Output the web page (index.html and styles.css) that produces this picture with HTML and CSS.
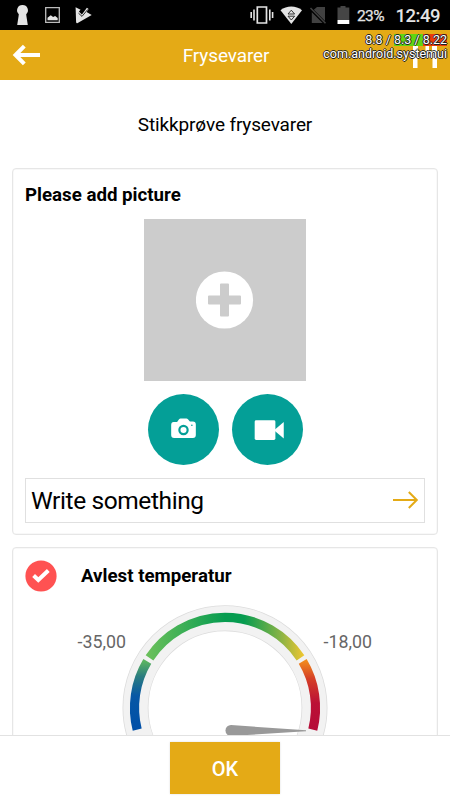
FILE: index.html
```html
<!DOCTYPE html>
<html lang="no">
<head>
<meta charset="utf-8">
<title>Frysevarer</title>
<link rel="stylesheet" href="styles.css">
</head>
<body>
<div class="screen">
  <div class="status">
    <svg class="status-left" width="110" height="30" viewBox="0 0 110 30" fill="#e4e4e4">
      <path d="M22.500 5a5.300 5.300 0 0 0-3.700 9.200l-.2 1.800-1.400 9h10.600l-1.400-9-.2-1.800A5.300 5.300 0 0 0 22.500 5z"/>
      <path d="M45.700 7.700h13.600v14.600H45.700z" fill="none" stroke="#bcbcbc" stroke-width="1.300"/>
      <path d="M47.500 20.300v-2.600l3.300-2.500 2.300 1.800 2-1 2.600 2v2.300z"/>
      <path d="M75.600 7.200l5 2.500-1.700 1.900 3 2.800 5-6.600 1.700 1.200-2 3.100 5.100 2.800-14 8c-1 .5-1.600.2-1.600-.8z"/>
      <path d="M78.500 13.200l3.500 3.200 5.800-7" fill="none" stroke="#000" stroke-width=".8"/>
    </svg>
    <div class="status-right">
      <svg width="104" height="30" viewBox="250 0 104 30" fill="#e4e4e4">
        <path d="M257.300 7h9.200v16h-9.200z" fill="none" stroke="#e4e4e4" stroke-width="1.700"/>
        <path d="M254 9.500v11M251.200 12v6M269.800 9.500v11M272.600 12v6" stroke="#e4e4e4" stroke-width="1.600"/>
        <path d="M280.500 10.200c6-5 15.500-5 21.500 0L291.300 24z"/>
        <path d="M288 14l3.300-3.800 3.300 3.800zM288 16.200h6.600l-3.300 3.800z" fill="none" stroke="#222" stroke-width=".9"/>
        <path d="M317 7h8v14L313.800 9.800zM311.800 12.200L322.600 23h-10.800z" fill="#414141"/>
        <path d="M310.500 8l15 15.200" stroke="#414141" stroke-width="1.500"/>
        <path d="M337.500 7.500h3V6h5v1.500h3.800V20h-11.800z" fill="#454545"/>
        <path d="M337.500 20h11.800v4h-11.800z" fill="#fff"/>
      </svg>
      <span class="battery">23%</span>
      <span class="clock">12:49</span>
    </div>
  </div>
  <header class="bar">
    <svg class="back" width="30" height="24" viewBox="0 0 30 24" fill="none" stroke="#fff" stroke-width="4"><path d="M30 12H6M14.300 3.200L5.500 12l8.800 8.800"/></svg>
    <h1>Frysevarer</h1>
    <svg class="save" width="28" height="28" viewBox="0 0 28 28" fill="#fff"><path d="M1 2h5v10h14V2h5v24h-4.500v-10.500h-15V26H1zM13.500 3h3.500v6h-3.500z"/></svg>
    <div class="overlay">
      <div class="load">8.8 / <span class="load-mid">8.3 /</span><span class="load-high">8.22</span></div>
      <div class="process">com.android.systemui</div>
    </div>
  </header>
  <main>
    <p class="intro">Stikkprøve frysevarer</p>
    <section class="card picture">
      <h2>Please add picture</h2>
      <div class="placeholder">
        <svg width="58" height="58" viewBox="0 0 58 58"><circle cx="28.500" cy="29" r="28.600" fill="#fff"/><path d="M24 13.500q0-1 1-1h7q1 0 1 1v11h11q1 0 1 1v7q0 1-1 1h-11v11q0 1-1 1h-7q-1 0-1-1v-11h-11q-1 0-1-1v-7q0-1 1-1h11z" fill="#ccc"/></svg>
      </div>
      <div class="actions">
        <span class="round"><svg width="71" height="71" viewBox="0 0 72 72"><path d="M26 28.500h3.500l2-3q.6-.7 1.500-.7h6q.9 0 1.500.7l2 2.500H45.500q3 0 3 3v10.500q0 3-3 3h-19q-3 0-3-3v-10q0-3 2.500-3z" fill="#fff"/><circle cx="36" cy="36.500" r="4.200" fill="none" stroke="#049f97" stroke-width="2.200"/><circle cx="44.500" cy="31.700" r=".8" fill="#049f97"/></svg></span>
        <span class="round"><svg width="71" height="71" viewBox="0 0 72 72" fill="#fff"><rect x="23" y="26.700" width="21" height="20" rx="1.500"/><path d="M43.500 36l9-7.500v16.500l-9-7.500z"/></svg></span>
      </div>
      <div class="field">
        <span>Write something</span>
        <svg width="26" height="18" viewBox="0 0 26 18" fill="none" stroke="#e4aa16" stroke-width="2"><path d="M0 9h24M15.800 1l8 8-8 8"/></svg>
      </div>
    </section>
    <section class="card reading">
      <div class="reading-head">
        <svg width="32" height="32" viewBox="0 0 32 32"><circle cx="16" cy="16" r="15.600" fill="#ff5252"/><path d="M8.600 15.500l4.700 4.500 10-9.500" fill="none" stroke="#fff" stroke-width="4"/></svg>
        <h2>Avlest temperatur</h2>
      </div>
      <svg class="gauge" width="424" height="150" viewBox="13 600 424 150">
        <defs>
          <linearGradient id="cold" gradientUnits="userSpaceOnUse" x1="0" y1="660" x2="0" y2="730"><stop offset="0" stop-color="#5cb560"/><stop offset=".22" stop-color="#2b7d80"/><stop offset=".5" stop-color="#0757a5"/><stop offset="1" stop-color="#004fa8"/></linearGradient>
          <linearGradient id="good" gradientUnits="userSpaceOnUse" x1="146" y1="0" x2="304" y2="0"><stop offset="0" stop-color="#6cc05b"/><stop offset=".5" stop-color="#069c50"/><stop offset=".62" stop-color="#069c50"/><stop offset=".85" stop-color="#87b346"/><stop offset="1" stop-color="#f0c62f"/></linearGradient>
          <linearGradient id="warm" gradientUnits="userSpaceOnUse" x1="0" y1="660" x2="0" y2="730"><stop offset="0" stop-color="#f18a1e"/><stop offset=".25" stop-color="#d54027"/><stop offset=".6" stop-color="#bb1035"/><stop offset="1" stop-color="#b50c38"/></linearGradient>
        </defs>
        <circle cx="225" cy="706.700" r="89.500" fill="none" stroke="#dcdcdc" stroke-width="26"/>
        <circle cx="225" cy="706.700" r="89.500" fill="none" stroke="#f2f2f2" stroke-width="24.400"/>
        <g fill="none" stroke-width="9.200">
          <path d="M137.200 728.700A90.500 90.500 0 0 1 147.300 660.400" stroke="url(#cold)"/>
          <path d="M149.500 656.900A90.500 90.500 0 0 1 300.500 656.900" stroke="url(#good)"/>
          <path d="M302.700 660.400A90.500 90.500 0 0 1 312.800 728.700" stroke="url(#warm)"/>
        </g>
        <path d="M306 729.300L231 724a5.500 5.500 0 0 0 0 11l75-4.700z" fill="#999"/>
        <text x="77.500" y="646.500">-35,00</text>
        <text x="323.500" y="646.500">-18,00</text>
      </svg>
    </section>
  </main>
  <footer><button>OK</button></footer>
</div>
</body>
</html>
```
FILE: styles.css
```css
* { box-sizing: border-box; margin: 0; }
body { font-family: Roboto, "Liberation Sans", sans-serif; color: #000; background: #fff; }
svg { display: block; flex: none; }
.screen { width: 450px; height: 800px; display: flex; flex-direction: column; overflow: hidden; }
.status { height: 30px; flex: none; background: #000; display: flex; justify-content: space-between; color: #e4e4e4; }
.status-right { display: flex; align-items: center; padding-right: 10px; line-height: 30px; }
.battery { width: 39px; padding: 1px 0 0 3px; font-size: 15.500px; font-weight: 400; letter-spacing: -.6px; -webkit-text-stroke: .25px #e4e4e4; }
.clock { width: 47px; font-size: 18.500px; font-weight: 500; letter-spacing: -.5px; text-align: right; white-space: nowrap; padding-top: 2px; }
.bar { position: relative; height: 50px; flex: none; background: #e4aa16; display: flex; align-items: center; justify-content: space-between; padding: 0 10px 0 10px; color: #fff; }
.bar h1 { font-size: 19px; font-weight: 400; line-height: 50px; padding-top: 2px; letter-spacing: -.12px; }
.save { margin-top: 2px; }
.overlay { position: absolute; top: 2px; right: 3px; text-align: right; font-size: 12.500px; line-height: 15px; color: #fff; text-shadow: 1px 0 #222, -1px 0 #222, 0 1px #222, 0 -1px #222; white-space: nowrap; }
.load { height: 14px; }
.load-mid, .load-high { display: inline-block; height: 12px; line-height: 12px; }
.load-mid { background: #61d511; padding-right: 3px; }
.load-high { background: #e93a0a; }
main { flex: 1; min-height: 0; overflow: hidden; padding: 0 12px; }
.intro { height: 88px; line-height: 90px; text-align: center; font-size: 19px; letter-spacing: -.14px; }
.card { border: 1px solid #e6e6e6; border-radius: 4px; box-shadow: inset 0 0 0 .5px #f2f2f2; }
.picture { height: 367px; padding: 1px 12px 0; display: flex; flex-direction: column; align-items: center; margin-bottom: 12px; }
h2 { font-size: 18.700px; font-weight: 700; line-height: 50px; white-space: nowrap; }
.picture h2 { align-self: flex-start; height: 49px; }
.placeholder { width: 162px; height: 162px; background: #ccc; display: flex; align-items: center; justify-content: center; }
.actions { display: flex; gap: 13px; margin: 13px 0 0; }
.round { width: 71px; height: 71px; border-radius: 50%; background: #049f97; }
.field { align-self: stretch; height: 45px; margin-top: 13px; padding: 0 5px; border: 1px solid #e0e0e0; display: flex; align-items: center; justify-content: space-between; font-size: 24.500px; letter-spacing: -.4px; }
.field svg { margin-top: -2px; }
.reading { height: 300px; }
.reading-head { display: flex; align-items: center; gap: 24px; height: 53px; padding: 2px 0 0 12px; }
.gauge { font-size: 17.800px; fill: #666; }
footer { height: 65px; flex: none; border-top: 1px solid #e2e2e2; display: flex; justify-content: center; padding-top: 6px; }
button { width: 110px; height: 52px; padding: 2px 0 0; border: 0; background: #e4aa16; color: #fff; font: 500 20px Roboto, sans-serif; box-shadow: 0 0 2px #ddd; }
```
